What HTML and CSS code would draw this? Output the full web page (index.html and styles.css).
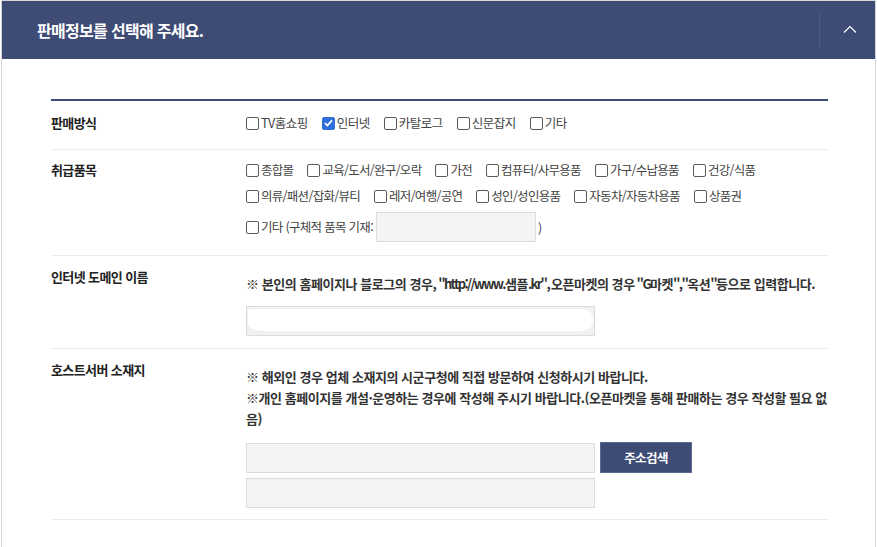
FILE: index.html
```html
<!DOCTYPE html>
<html lang="ko">
<head>
<meta charset="utf-8">
<link rel="stylesheet" href="styles.css">
</head>
<body>
<div class="panel">
  <div class="panel-head">
    <h2 class="panel-title">판매정보를 선택해 주세요.</h2>
    <div class="head-toggle">
      <svg width="14" height="8" viewBox="0 0 14 8"><path d="M1 7.5 L7 1.5 L13 7.5" fill="none" stroke="#fff" stroke-width="1.2"/></svg>
    </div>
  </div>
  <div class="panel-body">
    <div class="form">
      <div class="row row-first">
        <div class="label">판매방식</div>
        <div class="field">
          <div class="opts">
            <label class="opt"><span class="box"></span>TV홈쇼핑</label>
            <label class="opt"><span class="box checked"><svg width="9" height="8" viewBox="0 0 9 8"><path d="M1 4.2 L3.4 6.5 L8 1.3" fill="none" stroke="#fff" stroke-width="1.8"/></svg></span>인터넷</label>
            <label class="opt"><span class="box"></span>카탈로그</label>
            <label class="opt"><span class="box"></span>신문잡지</label>
            <label class="opt"><span class="box"></span>기타</label>
          </div>
        </div>
      </div>
      <div class="row row-items">
        <div class="label">취급품목</div>
        <div class="field">
          <div class="opts wrap">
            <label class="opt"><span class="box"></span>종합몰</label>
            <label class="opt"><span class="box"></span>교육/도서/완구/오락</label>
            <label class="opt"><span class="box"></span>가전</label>
            <label class="opt"><span class="box"></span>컴퓨터/사무용품</label>
            <label class="opt"><span class="box"></span>가구/수납용품</label>
            <label class="opt"><span class="box"></span>건강/식품</label>
            <label class="opt"><span class="box"></span>의류/패션/잡화/뷰티</label>
            <label class="opt"><span class="box"></span>레저/여행/공연</label>
            <label class="opt"><span class="box"></span>성인/성인용품</label>
            <label class="opt"><span class="box"></span>자동차/자동차용품</label>
            <label class="opt"><span class="box"></span>상품권</label>
          </div>
          <div class="etc-line">
            <label class="opt"><span class="box"></span>기타 (구체적 품목 기재:</label>
            <span class="inp etc-inp"></span>
            <span class="paren">)</span>
          </div>
        </div>
      </div>
      <div class="row row-domain">
        <div class="label">인터넷 도메인 이름</div>
        <div class="field">
          <p class="note">※ 본인의 홈페이지나 블로그의 경우,<span class="en"> "http://www.</span>샘플<span class="en">.kr", </span>오픈마켓의 경우<span class="en"> "G</span>마켓<span class="en">","</span>옥션<span class="en">"</span>등으로 입력합니다.</p>
          <div class="inp wide glossy"><span class="gloss"></span></div>
        </div>
      </div>
      <div class="row">
        <div class="label">호스트서버 소재지</div>
        <div class="field">
          <p class="note">※ 해외인 경우 업체 소재지의 시군구청에 직접 방문하여 신청하시기 바랍니다.<br>※개인 홈페이지를 개설·운영하는 경우에 작성해 주시기 바랍니다.(오픈마켓을 통해 판매하는 경우 작성할 필요 없음)</p>
          <div class="addr-line">
            <div class="inp wide"></div>
            <button class="btn">주소검색</button>
          </div>
          <div class="inp wide second"></div>
        </div>
      </div>
    </div>
  </div>
</div>
</body>
</html>
```

FILE: styles.css
```css
* { box-sizing: border-box; }
html, body { margin: 0; padding: 0; background: #fff; }
body {
  font-family: "Noto Sans CJK KR", "Noto Sans", sans-serif;
  color: #333;
}
.panel {
  margin-left: 1px;
  width: 875px;
  min-height: 547px;
  border: 1px solid #d6d6d6;
  border-bottom: none;
}
.panel-head {
  height: 58px;
  background: #3d4b75;
  display: flex;
  align-items: center;
  justify-content: space-between;
  padding-left: 35px;
}
.panel-title {
  margin: 0;
  font-size: 16px;
  font-weight: 700;
  letter-spacing: -0.7px;
  color: #fff;
}
.head-toggle {
  width: 56px;
  height: 38px;
  border-left: 1px solid #4c5a82;
  display: flex;
  align-items: center;
  justify-content: center;
}
.head-toggle svg { margin-left: 4px; margin-top: -2px; }
.panel-body {
  padding: 40px 47px 0 49px;
}
.form {
  border-top: 2px solid #3d4b75;
}
.row {
  display: flex;
  padding: 11px 0;
  border-bottom: 1px solid #ececec;
}
.row-first { padding: 12px 0 16px; }
.row-items { padding: 10px 0 13px; }
.row-domain { padding: 11px 0 12px; }
.label {
  width: 195px;
  flex: none;
  font-size: 13px;
  font-weight: 700;
  line-height: 20px;
  letter-spacing: -0.6px;
  color: #222;
}
.field { flex: 1; min-width: 0; }
.opts {
  display: flex;
  flex-wrap: wrap;
  column-gap: 14px;
  row-gap: 6px;
}
.opt {
  display: inline-flex;
  align-items: center;
  font-size: 12.5px;
  line-height: 20px;
  letter-spacing: -0.5px;
  color: #444;
  white-space: nowrap;
}
.row-items .opt { letter-spacing: -0.7px; }
.box {
  width: 13px;
  height: 13px;
  border: 1px solid #5a5a5a;
  border-radius: 2px;
  margin-right: 2px;
  background: #fff;
  display: inline-flex;
  align-items: center;
  justify-content: center;
  flex: none;
}
.box.checked {
  background: #2f6fdc;
  border-color: #2f6fdc;
}
.etc-line {
  display: flex;
  align-items: center;
  margin-top: 6px;
}
.inp {
  display: block;
  height: 30px;
  background: #f4f4f4;
  border: 1px solid #dcdcdc;
}
.etc-inp {
  width: 160px;
  margin-left: 3px;
}
.paren {
  font-size: 12.5px;
  color: #444;
  margin-left: 2px;
}
.note {
  margin: 6px 0 0;
  font-size: 13px;
  font-weight: 700;
  line-height: 21px;
  letter-spacing: -0.45px;
  color: #333;
}
.note .en { letter-spacing: -1.7px; }
.inp.wide { width: 349px; }
.glossy {
  margin-top: 12px;
  background: #f1f1f1;
  padding: 2px 1px 4px;
}
.gloss {
  display: block;
  height: 100%;
  background: #fff;
  border-radius: 3px 10px 10px 16px / 3px 10px 10px 8px;
}
.addr-line {
  display: flex;
  align-items: center;
  margin-top: 13px;
}
.btn {
  margin-left: 5px;
  width: 92px;
  height: 31px;
  background: #3d4b75;
  border: 1px solid #5d6a90;
  color: #fff;
  font-family: inherit;
  font-size: 12.5px;
  font-weight: 700;
  letter-spacing: -0.6px;
  padding: 0;
}
.inp.second { margin-top: 5px; }
```
